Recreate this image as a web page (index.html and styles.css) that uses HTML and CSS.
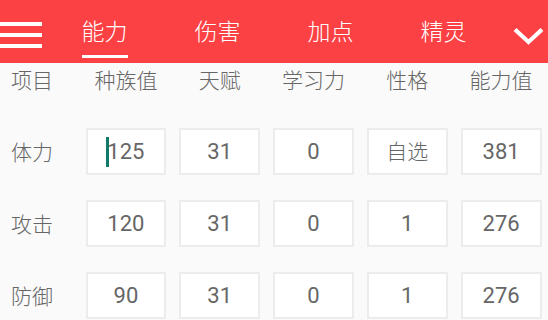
FILE: index.html
```html
<!DOCTYPE html>
<html lang="zh">
<head>
<meta charset="utf-8">
<title>能力</title>
<link rel="stylesheet" href="styles.css">
</head>
<body>
<header class="topbar">
  <div class="menu">
    <svg width="48" height="63" viewBox="0 0 48 63"><rect x="0" y="22" width="42" height="4" fill="#fff"/><rect x="0" y="33" width="42" height="4" fill="#fff"/><rect x="0" y="44" width="42" height="4" fill="#fff"/></svg>
  </div>
  <nav class="tabs">
    <div class="tab"><span class="tab-label active">能力</span></div>
    <div class="tab"><span class="tab-label">伤害</span></div>
    <div class="tab"><span class="tab-label">加点</span></div>
    <div class="tab"><span class="tab-label">精灵</span></div>
  </nav>
  <div class="more">
    <svg width="48" height="63" viewBox="0 0 48 63"><polyline points="15,29.5 28.5,42 42,29.5" fill="none" stroke="#fff" stroke-width="4.2"/></svg>
  </div>
</header>
<main class="sheet">
  <div class="head-row">
    <div class="rowlabel">项目</div>
    <div class="colhead">种族值</div>
    <div class="colhead">天赋</div>
    <div class="colhead">学习力</div>
    <div class="colhead">性格</div>
    <div class="colhead">能力值</div>
  </div>
  <div class="rows">
    <div class="row">
      <div class="rowlabel">体力</div>
      <div class="cell"><div class="box"><span class="val focused"><span class="caret"></span>125</span></div></div>
      <div class="cell"><div class="box"><span class="val">31</span></div></div>
      <div class="cell"><div class="box"><span class="val">0</span></div></div>
      <div class="cell"><div class="box"><span class="val cjk">自选</span></div></div>
      <div class="cell"><div class="box"><span class="val">381</span></div></div>
    </div>
    <div class="row">
      <div class="rowlabel">攻击</div>
      <div class="cell"><div class="box"><span class="val">120</span></div></div>
      <div class="cell"><div class="box"><span class="val">31</span></div></div>
      <div class="cell"><div class="box"><span class="val">0</span></div></div>
      <div class="cell"><div class="box"><span class="val">1</span></div></div>
      <div class="cell"><div class="box"><span class="val">276</span></div></div>
    </div>
    <div class="row">
      <div class="rowlabel">防御</div>
      <div class="cell"><div class="box"><span class="val">90</span></div></div>
      <div class="cell"><div class="box"><span class="val">31</span></div></div>
      <div class="cell"><div class="box"><span class="val">0</span></div></div>
      <div class="cell"><div class="box"><span class="val">1</span></div></div>
      <div class="cell"><div class="box"><span class="val">276</span></div></div>
    </div>
  </div>
</main>
</body>
</html>
```
FILE: styles.css
```css
* { box-sizing: border-box; }
html, body { margin: 0; padding: 0; }
body {
  width: 548px;
  height: 320px;
  overflow: hidden;
  background: #fafafa;
  font-family: "Noto Sans CJK SC", "Noto Sans", sans-serif;
  font-weight: 300;
  color: #666;
}
.topbar {
  display: flex;
  height: 63px;
  background: #fc4145;
}
.menu, .more {
  width: 48px;
  flex: none;
}
.menu svg, .more svg { display: block; }
.tabs {
  flex: 1;
  display: flex;
}
.tab {
  flex: 1;
  display: flex;
  justify-content: center;
  padding-top: 15px;
}
.tab-label {
  display: block;
  height: 43px;
  font-size: 23px;
  line-height: 30px;
  color: #fff;
  padding-bottom: 10px;
  border-bottom: 3px solid transparent;
}
.tab-label.active {
  border-bottom-color: #fff;
}
.head-row, .row {
  display: grid;
  grid-template-columns: 79px repeat(5, 1fr);
  align-items: center;
}
.head-row {
  height: 32px;
}
.rowlabel {
  padding-left: 11px;
  font-size: 21px;
  line-height: 28px;
  color: #666;
}
.colhead {
  text-align: center;
  font-size: 21px;
  line-height: 28px;
  color: #666;
}
.rows {
  display: flex;
  flex-direction: column;
  gap: 25px;
  margin-top: 33px;
}
.row .rowlabel {
  margin-top: -2px;
}
.cell {
  padding: 0 6.5px;
}
.box {
  height: 47px;
  background: #fff;
  border: 2px solid #ececec;
  display: flex;
  align-items: center;
  justify-content: center;
}
.val {
  position: relative;
  font-family: Roboto, "Noto Sans CJK SC", sans-serif;
  font-weight: 400;
  font-size: 22px;
  color: #666;
}
.val.cjk {
  font-family: "Noto Sans CJK SC", sans-serif;
  font-weight: 300;
  font-size: 21px;
  line-height: 28px;
  margin-top: -4px;
}
.caret {
  position: absolute;
  left: -1px;
  top: 50%;
  width: 3px;
  height: 30px;
  margin-top: -15px;
  background: #0f7a6a;
}
```
